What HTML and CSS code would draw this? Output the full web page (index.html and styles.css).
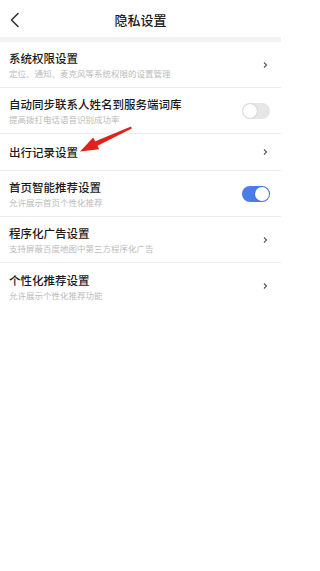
FILE: index.html
```html
<!DOCTYPE html>
<html lang="zh">
<head>
<meta charset="utf-8">
<title>隐私设置</title>
<link rel="stylesheet" href="styles.css">
</head>
<body>
<div class="page">
  <header class="topbar">
    <svg class="back" width="20" height="20" viewBox="0 0 20 20"><path d="M13 3.5 L6.5 10 L13 16.5" fill="none" stroke="#333" stroke-width="1.6" stroke-linecap="round" stroke-linejoin="round"/></svg>
    <h1 class="title">隐私设置</h1>
  </header>
  <div class="band"></div>
  <ul class="list">
    <li class="row">
      <div class="text"><div class="name">系统权限设置</div><div class="desc">定位、通知、麦克风等系统权限的设置管理</div></div>
      <svg class="chev" width="6" height="8" viewBox="0 0 6 8"><path d="M2 1.5 L4.5 4 L2 6.5" fill="none" stroke="#555" stroke-width="1.1"/></svg>
    </li>
    <li class="row">
      <div class="text"><div class="name">自动同步联系人姓名到服务端词库</div><div class="desc">提高拨打电话语音识别成功率</div></div>
      <span class="toggle"><span class="knob"></span></span>
    </li>
    <li class="row single">
      <div class="text"><div class="name">出行记录设置</div></div>
      <svg class="chev" width="6" height="8" viewBox="0 0 6 8"><path d="M2 1.5 L4.5 4 L2 6.5" fill="none" stroke="#555" stroke-width="1.1"/></svg>
    </li>
    <li class="row">
      <div class="text"><div class="name">首页智能推荐设置</div><div class="desc">允许展示首页个性化推荐</div></div>
      <span class="toggle on"><span class="knob"></span></span>
    </li>
    <li class="row">
      <div class="text"><div class="name">程序化广告设置</div><div class="desc">支持屏蔽百度地图中第三方程序化广告</div></div>
      <svg class="chev" width="6" height="8" viewBox="0 0 6 8"><path d="M2 1.5 L4.5 4 L2 6.5" fill="none" stroke="#555" stroke-width="1.1"/></svg>
    </li>
    <li class="row last">
      <div class="text"><div class="name">个性化推荐设置</div><div class="desc">允许展示个性化推荐功能</div></div>
      <svg class="chev" width="6" height="8" viewBox="0 0 6 8"><path d="M2 1.5 L4.5 4 L2 6.5" fill="none" stroke="#555" stroke-width="1.1"/></svg>
    </li>
  </ul>
  <svg class="arrow" width="281" height="571" viewBox="0 0 281 571">
    <polygon points="131,126.5 131.8,128.6 96.5,146.2 94.8,141.6" fill="#e3201c"/>
    <polygon points="80,151.5 93.2,137.4 99.2,149.2" fill="#e3201c"/>
  </svg>
</div>
</body>
</html>
```

FILE: styles.css
```css
* { box-sizing: border-box; }
html, body { margin: 0; padding: 0; background: #fff; }
body {
  font-family: "Noto Sans CJK SC", "Noto Sans", sans-serif;
  color: #222;
}
.page { position: relative; width: 281px; min-height: 571px; background: #fff; }
.topbar {
  height: 37px;
  display: flex;
  align-items: center;
  justify-content: center;
  position: relative;
}
.back { position: absolute; left: 5px; top: 10px; }
.title {
  margin: 0;
  font-size: 13px;
  font-weight: 500;
  color: #1a1a1a;
  line-height: 16px;
  margin-top: 3px;
}
.band { height: 5px; background: #f3f3f3; }
.list { list-style: none; margin: 0; padding: 0; }
.row {
  display: flex;
  align-items: center;
  justify-content: space-between;
  padding: 8px 11px 8px 9px;
  border-bottom: 1px solid #ececec;
  min-height: 46px;
}
.row.single { min-height: 37px; padding-top: 10px; padding-bottom: 10px; }
.row.last { border-bottom: none; }
.text { display: flex; flex-direction: column; }
.name {
  font-size: 11.5px;
  line-height: 16px;
  font-weight: 500;
  color: #1a1a1a;
}
.desc {
  font-size: 8.5px;
  line-height: 12px;
  margin-top: 1px;
  color: #bbbbbb;
}
.chev { flex: none; margin-right: 2px; }
.toggle {
  flex: none;
  width: 28px;
  height: 16px;
  border-radius: 8px;
  background: #e6e6e6;
  position: relative;
}
.knob {
  position: absolute;
  top: 1px;
  left: 1px;
  width: 14px;
  height: 14px;
  border-radius: 50%;
  background: #fff;
  box-shadow: 0 0 1.5px rgba(0,0,0,0.25);
}
.toggle.on { background: #4a7de8; }
.toggle.on .knob { left: 13px; }
.arrow { position: absolute; left: 0; top: 0; pointer-events: none; }
```
